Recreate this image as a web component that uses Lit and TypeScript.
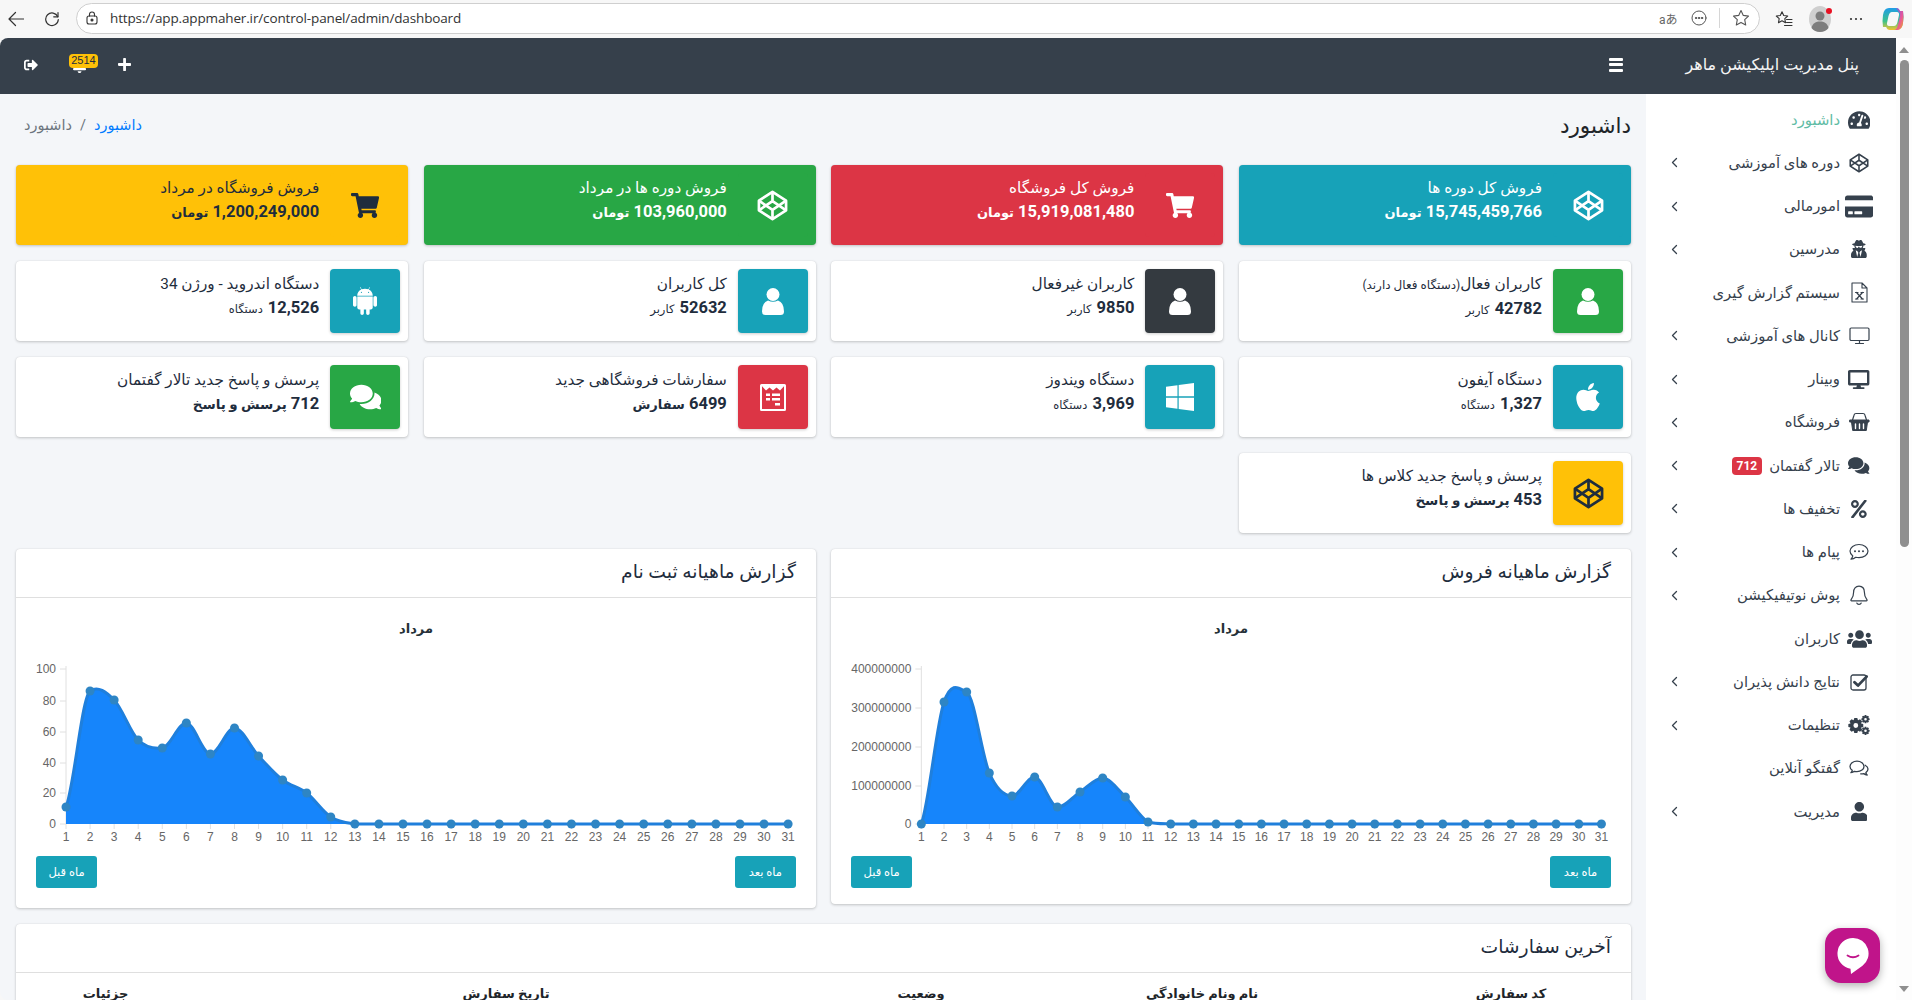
import { LitElement, html, css, svg } from 'lit';
import { customElement } from 'lit/decorators.js';

type Icon = { w: number; d: string };

const FA: Record<string, Icon> = {
  cart: { w: 576, d: 'M528.12 301.319l47.273-208C578.806 78.301 567.391 64 551.99 64H159.208l-9.166-44.81C147.758 8.021 137.93 0 126.529 0H24C10.745 0 0 10.745 0 24v16c0 13.255 10.745 24 24 24h69.883l70.248 343.435C147.325 417.1 136 435.222 136 456c0 30.928 25.072 56 56 56s56-25.072 56-56c0-15.674-6.447-29.835-16.824-40h209.647C430.447 426.165 424 440.326 424 456c0 30.928 25.072 56 56 56s56-25.072 56-56c0-22.172-12.888-41.332-31.579-50.405l5.517-24.276c3.413-15.018-8.002-29.319-23.403-29.319H218.117l-6.545-32h293.145c11.206 0 20.92-7.754 23.403-18.681z' },
  user: { w: 448, d: 'M224 256c70.7 0 128-57.3 128-128S294.7 0 224 0 96 57.3 96 128s57.3 128 128 128zm89.6 32h-16.7c-22.2 10.2-46.9 16-72.9 16s-50.6-5.8-72.9-16h-16.7C60.2 288 0 348.2 0 422.4V464c0 26.5 21.5 48 48 48h352c26.5 0 48-21.5 48-48v-41.6c0-74.2-60.2-134.4-134.4-134.4z' },
  windows: { w: 448, d: 'M0 93.7l183.6-25.3v177.4H0V93.7zm0 324.6l183.6 25.3V268.4H0v149.9zm202.8 28L448 480V268.4H202.8v177.9zm0-380.6v180.1H448V32L202.8 65.7z' },
  apple: { w: 384, d: 'M318.7 268.7c-.2-36.7 16.4-64.4 50-84.8-18.8-26.9-47.2-41.7-84.7-44.6-35.5-2.8-74.3 20.7-88.5 20.7-15 0-49.4-19.7-76.4-19.7C63.3 141.2 4 184.8 4 273.5q0 39.3 14.4 81.2c12.8 36.7 59 126.7 107.2 125.2 25.2-.6 43-17.9 75.8-17.9 31.8 0 48.3 17.9 76.4 17.9 48.6-.7 90.4-82.5 102.6-119.3-65.2-30.7-61.7-90-61.7-91.9zm-56.6-164.2c27.3-32.4 24.8-61.9 24-72.5-24.1 1.4-52 16.4-67.9 34.9-17.5 19.8-27.8 44.3-25.6 71.9 26.1 2 49.9-11.4 69.5-34.3z' },
  android: { w: 448, d: 'M89.6 204.5v115.8c0 15.4-12.1 27.7-27.5 27.7-15.3 0-30.1-12.4-30.1-27.7V204.5c0-15.1 14.8-27.5 30.1-27.5 15.1 0 27.5 12.4 27.5 27.5zm10.8 157c0 16.4 13.2 29.6 29.6 29.6h19.9l.3 61.1c0 36.9 55.2 36.6 55.2 0v-61.1h37.2v61.1c0 36.7 55.5 36.8 55.5 0v-61.1h20.2c16.2 0 29.4-13.2 29.4-29.6V182.1H100.4v179.4zm248-189.1H99.3c0-42.8 25.6-80 63.6-99.4l-19.1-35.3c-2.8-4.9 4.3-8 6.7-3.8l19.4 35.6c34.9-15.5 75-14.7 108.3 0L297.5 34c2.5-4.3 9.5-1.1 6.7 3.8L285.1 73c37.7 19.4 63.3 56.6 63.3 99.4zm-170.7-55.5c0-5.7-4.6-10.5-10.5-10.5-5.7 0-10.2 4.8-10.2 10.5s4.6 10.5 10.2 10.5c5.9 0 10.5-4.8 10.5-10.5zm113.4 0c0-5.7-4.6-10.5-10.2-10.5-5.9 0-10.5 4.8-10.5 10.5s4.6 10.5 10.5 10.5c5.6 0 10.2-4.8 10.2-10.5zM416 204.5v115.8c0 15.4-12.4 27.7-27.5 27.7-15.3 0-30.1-12.4-30.1-27.7V204.5c0-15.1 14.8-27.5 30.1-27.5 15.1 0 27.5 12.4 27.5 27.5z' },
  comments: { w: 576, d: 'M416 192c0-88.4-93.1-160-208-160S0 103.6 0 192c0 34.3 14.1 65.9 38 92-13.4 30.2-35.5 54.2-35.8 54.5-2.2 2.3-2.8 5.7-1.5 8.7S4.8 352 8 352c36.6 0 66.9-12.3 88.7-25 32.2 15.7 70.3 25 111.3 25 114.9 0 208-71.6 208-160zm122 220c23.9-26 38-57.7 38-92 0-66.9-53.5-124.2-129.3-148.1.9 6.6 1.3 13.3 1.3 20.1 0 105.9-107.7 192-240 192-10.8 0-21.3-.8-31.7-1.9C207.8 439.6 281.8 480 368 480c41 0 79.1-9.2 111.3-25 21.8 12.7 52.1 25 88.7 25 3.2 0 6.1-1.9 7.3-4.8 1.3-2.9.7-6.3-1.5-8.7-.3-.3-22.4-24.2-35.8-54.5z' },
  tach: { w: 576, d: 'M288 32C128.94 32 0 160.94 0 320c0 52.8 14.25 102.26 39.06 144.8 5.61 9.62 16.3 15.2 27.44 15.2h443c11.14 0 21.83-5.58 27.44-15.2C561.75 422.26 576 372.8 576 320c0-159.06-128.94-288-288-288zm0 64c14.71 0 26.58 10.13 30.32 23.65-1.11 2.26-2.64 4.23-3.45 6.67l-9.22 27.67c-5.13 3.49-10.97 6.01-17.64 6.01-17.67 0-32-14.33-32-32S270.33 96 288 96zM96 384c-17.67 0-32-14.33-32-32s14.33-32 32-32 32 14.33 32 32-14.33 32-32 32zm48-160c-17.67 0-32-14.33-32-32s14.33-32 32-32 32 14.33 32 32-14.33 32-32 32zm246.77-72.41l-61.33 184C343.13 347.33 352 364.54 352 384c0 11.72-3.38 22.55-8.88 32H232.88c-5.5-9.45-8.88-20.28-8.88-32 0-33.94 26.5-61.43 59.9-63.59l61.34-184.01c4.17-12.56 17.73-19.45 30.36-15.17 12.57 4.19 19.35 17.79 15.17 30.36zm14.66 57.2l15.52-46.55c3.47-1.29 7.13-2.23 11.05-2.23 17.67 0 32 14.33 32 32s-14.33 32-32 32c-11.38-.01-20.89-6.28-26.57-15.22zM480 384c-17.67 0-32-14.33-32-32s14.33-32 32-32 32 14.33 32 32-14.33 32-32 32z' },
  card: { w: 576, d: 'M0 432c0 26.5 21.5 48 48 48h480c26.5 0 48-21.5 48-48V256H0v176zm192-68c0-6.6 5.4-12 12-12h136c6.6 0 12 5.4 12 12v40c0 6.6-5.4 12-12 12H204c-6.6 0-12-5.4-12-12v-40zm-128 0c0-6.6 5.4-12 12-12h72c6.6 0 12 5.4 12 12v40c0 6.6-5.4 12-12 12H76c-6.6 0-12-5.4-12-12v-40zM576 80v48H0V80c0-26.5 21.5-48 48-48h480c26.5 0 48 21.5 48 48z' },
  secret: { w: 448, d: 'M383.9 308.3l23.9-62.6c4-10.5-3.7-21.7-15-21.7h-58.5c11-18.9 17.8-40.6 17.8-64v-.3c39.2-7.8 64-19.1 64-31.7 0-13.3-27.3-25.1-70.1-33-9.2-32.8-27-65.8-40.6-82.8-9.5-11.9-25.9-15.6-39.5-8.8l-27.6 13.8c-9 4.5-19.6 4.5-28.6 0L182.1 3.4c-13.6-6.8-30-3.1-39.5 8.8-13.5 17-31.4 50-40.6 82.8-42.7 7.9-70 19.7-70 33 0 12.6 24.8 23.9 64 31.7v.3c0 23.4 6.8 45.1 17.8 64H56.3c-11.5 0-19.2 11.7-14.7 22.3l25.8 60.2C27.3 329.8 0 372.7 0 422.4v44.8C0 491.9 20.1 512 44.8 512h358.4c24.7 0 44.8-20.1 44.8-44.8v-44.8c0-48.4-25.8-90.4-64.1-114.1zM176 480l-41.6-192 49.6 32 24 40-32 120zm96 0l-32-120 24-40 49.6-32L272 480zm41.7-298.5c-3.9 11.9-7 24.6-16.5 33.4-10.1 9.3-48 22.4-64-25-2.8-8.4-15.4-8.4-18.3 0-17 50.2-56 32.4-64 25-9.5-8.8-12.7-21.5-16.5-33.4-.8-2.5-6.3-5.7-6.3-5.8v-10.8c28.3 3.6 61 5.8 96 5.8s67.7-2.1 96-5.8v10.8c-.1.1-5.6 3.2-6.4 5.8z' },
  desktop: { w: 576, d: 'M528 0H48C21.5 0 0 21.5 0 48v320c0 26.5 21.5 48 48 48h192l-16 48h-72c-13.3 0-24 10.7-24 24s10.7 24 24 24h272c13.3 0 24-10.7 24-24s-10.7-24-24-24h-72l-16-48h192c26.5 0 48-21.5 48-48V48c0-26.5-21.5-48-48-48zm-16 352H64V64h448v288z' },
  percent: { w: 448, d: 'M112 224c61.9 0 112-50.1 112-112S173.9 0 112 0 0 50.1 0 112s50.1 112 112 112zm0-160c26.5 0 48 21.5 48 48s-21.5 48-48 48-48-21.5-48-48 21.5-48 48-48zm224 224c-61.9 0-112 50.1-112 112s50.1 112 112 112 112-50.1 112-112-50.1-112-112-112zm0 160c-26.5 0-48-21.5-48-48s21.5-48 48-48 48 21.5 48 48-21.5 48-48 48zM392.3.2l31.6-.1c19.4-.1 30.9 21.8 19.7 37.8L77.4 501.6a23.95 23.95 0 0 1-19.6 10.2l-33.4.1c-19.5 0-30.9-21.9-19.7-37.8l368-463.7C377.2 4 384.5.2 392.3.2z' },
  users: { w: 640, d: 'M96 224c35.3 0 64-28.7 64-64s-28.7-64-64-64-64 28.7-64 64 28.7 64 64 64zm448 0c35.3 0 64-28.7 64-64s-28.7-64-64-64-64 28.7-64 64 28.7 64 64 64zm32 32h-64c-17.6 0-33.5 7.1-45.1 18.6 40.3 22.1 68.9 62 75.1 109.4h66c17.7 0 32-14.3 32-32v-32c0-35.3-28.7-64-64-64zm-256 0c61.9 0 112-50.1 112-112S381.9 32 320 32 208 82.1 208 144s50.1 112 112 112zm76.8 32h-8.3c-20.8 10-43.9 16-68.5 16s-47.6-6-68.5-16h-8.3C179.6 288 128 339.6 128 403.2V432c0 26.5 21.5 48 48 48h288c26.5 0 48-21.5 48-48v-28.8c0-63.6-51.6-115.2-115.2-115.2zm-223.7-13.4C161.5 263.1 145.6 256 128 256H64c-35.3 0-64 28.7-64 64v32c0 17.7 14.3 32 32 32h65.9c6.3-47.4 34.9-87.3 75.2-109.4z' },
  signout: { w: 512, d: 'M497 273L329 441c-15 15-41 4.5-41-17v-96H152c-13.3 0-24-10.7-24-24v-96c0-13.3 10.7-24 24-24h136V88c0-21.4 25.9-32 41-17l168 168c9.3 9.4 9.3 24.6 0 34zM192 436v-40c0-6.6-5.4-12-12-12H96c-17.7 0-32-14.3-32-32V160c0-17.7 14.3-32 32-32h84c6.6 0 12-5.4 12-12V76c0-6.6-5.4-12-12-12H96c-53 0-96 43-96 96v192c0 53 43 96 96 96h84c6.6 0 12-5.4 12-12z' },
  plus: { w: 448, d: 'M416 208H272V64c0-17.67-14.33-32-32-32h-32c-17.67 0-32 14.33-32 32v144H32c-17.67 0-32 14.33-32 32v32c0 17.67 14.33 32 32 32h144v144c0 17.67 14.33 32 32 32h32c17.67 0 32-14.33 32-32V304h144c17.67 0 32-14.33 32-32v-32c0-17.67-14.33-32-32-32z' },
  bell: { w: 448, d: 'M224 512c35.32 0 63.97-28.65 63.97-64H160.03c0 35.35 28.65 64 63.97 64zm215.39-149.71c-19.32-20.76-55.47-51.99-55.47-154.29 0-77.7-54.48-139.9-127.94-155.16V32c0-17.67-14.32-32-31.98-32s-31.98 14.33-31.98 32v20.84C118.56 68.1 64.08 130.3 64.08 208c0 102.3-36.15 133.53-55.47 154.29-6 6.45-8.66 14.16-8.61 21.71.11 16.4 12.98 32 32.1 32h383.8c19.12 0 32-15.6 32.1-32 .05-7.55-2.61-15.27-8.61-21.71z' },
};

const fa = (name: string, h: number) => {
  const ic = FA[name];
  return html`<svg class="fa" viewBox="0 0 ${ic.w} 512" width=${(ic.w / 512) * h} height=${h}><path fill="currentColor" d=${ic.d}></path></svg>`;
};

const codepen = (size: number, sw = 2.1) => html`<svg class="fa" viewBox="0 0 24 24" width=${size} height=${size} fill="none" stroke="currentColor" stroke-width=${sw} stroke-linejoin="round">
  <path d="M12 1.5 22.5 8.3v7.4L12 22.5 1.5 15.7V8.3z"></path>
  <path d="M1.5 8.3 12 15.3l10.5-7M1.5 15.7 12 8.7l10.5 7M12 1.5v7.2M12 15.3v7.2"></path>
</svg>`;

const stroke = (w: number, h: number, vb: string, body: unknown, sw = 1.5) => html`<svg class="fa" viewBox=${vb} width=${w} height=${h} fill="none" stroke="currentColor" stroke-width=${sw} stroke-linecap="round" stroke-linejoin="round">${body}</svg>`;

// the rounded bust used on the user cards
const bust = html`<svg class="fa" viewBox="0 0 22 27" width="22" height="27"><circle cx="11" cy="6.500" r="6.500" fill="currentColor"></circle><path d="M0 23.500q0-9 6-11 5 2.500 10 0 6 2 6 11 0 3.500-3.500 3.500h-15Q0 27 0 23.500z" fill="currentColor"></path></svg>`;

const gear = (cx: number, cy: number, ro: number, ri: number, teeth: number, hole: number) => {
  let d = '';
  for (let i = 0; i < teeth; i++) {
    const a = (i / teeth) * Math.PI * 2;
    const s = Math.PI / teeth;
    const pts: [number, number][] = [[ri, a - s * 0.95], [ro, a - s * 0.5], [ro, a + s * 0.5], [ri, a + s * 0.95]];
    pts.forEach(([r, t], j) => {
      d += `${i === 0 && j === 0 ? 'M' : 'L'}${(cx + r * Math.cos(t)).toFixed(2)} ${(cy + r * Math.sin(t)).toFixed(2)}`;
    });
  }
  d += `Z M${cx - hole} ${cy}a${hole} ${hole} 0 1 0 ${hole * 2} 0a${hole} ${hole} 0 1 0 ${-hole * 2} 0Z`;
  return d;
};

const sideIcons: Record<string, unknown> = {
  tach: fa('tach', 20),
  codepen: codepen(20, 1.9),
  card: fa('card', 25),
  secret: fa('secret', 18),
  excel: stroke(17, 21, '0 0 17 21', svg`<path d="M1 1h10l5 5v14H1zM11 1v5h5"></path><path d="M5.5 10.5l6 6.5M11.5 10.5l-6 6.5M4.5 10.5h2.5M10 10.5h2.5M4.5 17h2.5M10 17h2.5" stroke-width="1.2"></path>`, 1.1),
  tv: stroke(21, 18, '0 0 21 18', svg`<rect x="1" y="1" width="19" height="12.5" rx="1.2"></rect><path d="M10.5 13.5v3M6.5 16.5h8"></path>`, 1.2),
  desktop: fa('desktop', 19),
  basket: stroke(21, 20, '0 0 21 20', svg`<path d="M3.5 8 5 3.2Q5.4 1.5 7 1.5h7q1.6 0 2 1.7L17.5 8" stroke-width="1.2"></path><path d="M1 8h19v2H1zM2.5 10l1.2 8.5h13.6l1.2-8.5z" fill="currentColor"></path><path d="M6.5 12v4.5M10.5 12v4.5M14.5 12v4.5" stroke="#fff" stroke-width="1.4"></path>`, 1),
  comments: fa('comments', 19),
  percent: fa('percent', 18),
  dots: stroke(20, 18, '0 0 20 18', svg`<path d="M10 1.5c5 0 9 2.9 9 6.6s-4 6.6-9 6.6c-1.1 0-2.2-.1-3.2-.4-1.3 1-2.8 1.7-4.8 1.9.9-1 1.6-2.1 1.8-3.3C2 11.6 1 10 1 8.1 1 4.4 5 1.5 10 1.5z"></path><circle cx="6" cy="8.2" r="1" fill="currentColor" stroke="none"></circle><circle cx="10" cy="8.2" r="1" fill="currentColor" stroke="none"></circle><circle cx="14" cy="8.2" r="1" fill="currentColor" stroke="none"></circle>`, 1.2),
  bell: stroke(18, 20, '0 0 18 20', svg`<path d="M9 1.2c-3.4 0-5.4 2.6-5.4 6 0 4.6-1.5 6-2.6 7.6-.3.5 0 1 .6 1h14.8c.6 0 .9-.5.6-1-1.1-1.6-2.6-3-2.6-7.6 0-3.4-2-6-5.4-6z"></path><path d="M6.8 18c.3 1 1.2 1.4 2.2 1.4s1.9-.4 2.2-1.4"></path>`, 1.2),
  users: fa('users', 20),
  check: stroke(18, 18, '0 0 18 18', svg`<rect x="1" y="2" width="15" height="15" rx="2" stroke-width="1.3"></rect><path d="M4.5 9.2 8 12.6 16.6 3.6" stroke-width="2.8"></path>`),
  cogs: html`<svg class="fa" viewBox="0 0 22 20" width="22" height="20"><path fill="currentColor" fill-rule="evenodd" d=${gear(7.8, 10.5, 7.6, 5.8, 8, 2.4)}></path><path fill="currentColor" fill-rule="evenodd" d=${gear(17.5, 4.2, 4.2, 3.1, 8, 1.3)}></path><path fill="currentColor" fill-rule="evenodd" d=${gear(17.5, 15.8, 4.2, 3.1, 8, 1.3)}></path></svg>`,
  chat: stroke(20, 17, '0 0 20 17', svg`<path d="M8 1.2c3.9 0 7 2.3 7 5.2s-3.1 5.2-7 5.2c-.9 0-1.7-.1-2.5-.3-1 .7-2.2 1.2-3.6 1.4.7-.7 1.2-1.6 1.4-2.5C2 9.5 1 8 1 6.4 1 3.5 4.1 1.2 8 1.2z"></path><path d="M16.2 5.2c1.7.9 2.8 2.3 2.8 3.9 0 1.4-.8 2.6-2.1 3.5.2.9.6 1.7 1.3 2.4-1.4-.2-2.5-.7-3.5-1.4-1 .3-2 .4-3 .3"></path>`, 1.3),
  user: fa('user', 19),
};

const ordersIcon = html`<svg class="fa" viewBox="0 0 26 27" width="26" height="27"><path fill="#fff" fill-rule="evenodd" d="M1.5 0h23A1.5 1.5 0 0 1 26 1.5v24a1.5 1.5 0 0 1-1.5 1.5h-23A1.5 1.5 0 0 1 0 25.500v-24A1.500 1.500 0 0 1 1.500 0zM2 2.200 6 6.400l3.500-3 3.500 3 3.500-3 3.500 3 4-4.200v22.800H2zM6 9.500v2.600h4V9.500zm6 0v2.600h8V9.500zM6 14v2.600h4V14zm6 0v2.600h8V14zM15 19v2.400h5V19z"></path></svg>`;

type Info = { title: string; note?: string; value: string; word?: string; tight?: boolean; unit?: string; color: string; icon: unknown; };

const solid: Info[] = [
  { title: 'فروش کل دوره ها', value: '15,745,459,766', word: 'تومان', tight: true, color: 'teal', icon: codepen(31) },
  { title: 'فروش کل فروشگاه', value: '15,919,081,480', word: 'تومان', tight: true, color: 'red', icon: fa('cart', 25) },
  { title: 'فروش دوره ها در مرداد', value: '103,960,000', word: 'تومان', tight: true, color: 'green', icon: codepen(31) },
  { title: 'فروش فروشگاه در مرداد', value: '1,200,249,000', word: 'تومان', tight: true, color: 'yellow', icon: fa('cart', 25) },
];

const boxes: Info[] = [
  { title: 'کاربران فعال', note: '(دستگاه فعال دارند)', value: '42782', unit: 'کاربر', color: 'green', icon: bust },
  { title: 'کاربران غیرفعال', value: '9850', unit: 'کاربر', color: 'dark', icon: bust },
  { title: 'کل کاربران', value: '52632', unit: 'کاربر', color: 'teal', icon: bust },
  { title: 'دستگاه اندروید - ورژن 34', value: '12,526', unit: 'دستگاه', color: 'teal', icon: fa('android', 32) },
  { title: 'دستگاه آیفون', value: '1,327', unit: 'دستگاه', color: 'teal', icon: fa('apple', 32) },
  { title: 'دستگاه ویندوز', value: '3,969', unit: 'دستگاه', color: 'teal', icon: fa('windows', 32) },
  { title: 'سفارشات فروشگاهی جدید', value: '6499', word: 'سفارش', tight: true, color: 'red', icon: ordersIcon },
  { title: 'پرسش و پاسخ جدید تالار گفتمان', value: '712', word: 'پرسش و پاسخ', color: 'green', icon: fa('comments', 28) },
  { title: 'پرسش و پاسخ جدید کلاس ها', value: '453', word: 'پرسش و پاسخ', color: 'yellow', icon: codepen(31) },
];

const menu: { icon: string; label: string; more?: boolean; active?: boolean; badge?: string }[] = [
  { icon: 'tach', label: 'داشبورد', active: true },
  { icon: 'codepen', label: 'دوره های آموزشی', more: true },
  { icon: 'card', label: 'امورمالی', more: true },
  { icon: 'secret', label: 'مدرسین', more: true },
  { icon: 'excel', label: 'سیستم گزارش گیری' },
  { icon: 'tv', label: 'کانال های آموزشی', more: true },
  { icon: 'desktop', label: 'وبینار', more: true },
  { icon: 'basket', label: 'فروشگاه', more: true },
  { icon: 'comments', label: 'تالار گفتمان', more: true, badge: '712' },
  { icon: 'percent', label: 'تخفیف ها', more: true },
  { icon: 'dots', label: 'پیام ها', more: true },
  { icon: 'bell', label: 'پوش نوتیفیکیشن', more: true },
  { icon: 'users', label: 'کاربران' },
  { icon: 'check', label: 'نتایج دانش پذیران', more: true },
  { icon: 'cogs', label: 'تنظیمات', more: true },
  { icon: 'chat', label: 'گفتگو آنلاین' },
  { icon: 'user', label: 'مدیریت', more: true },
];

type Chart = { title: string; left: number; x0: number; step: number; ticks: [string, number][]; ys: number[]; next: string; };

const BASE = 824;
const pad = (ys: number[]) => ys.concat(Array(31 - ys.length).fill(BASE));

const charts: Chart[] = [
  {
    title: 'گزارش ماهیانه فروش', left: 831.67, x0: 922, step: 22.67,
    ticks: [['400000000', 669], ['300000000', 708], ['200000000', 747], ['100000000', 786], ['0', 824]],
    ys: pad([824, 702, 692, 773, 796, 777, 807, 792, 778, 797, 822]), next: 'ماه بعد',
  },
  {
    title: 'گزارش ماهیانه ثبت نام', left: 16, x0: 66, step: 24.07,
    ticks: [['100', 669], ['80', 701], ['60', 732], ['40', 763], ['20', 793], ['0', 824]],
    ys: pad([807, 691, 700, 740, 748, 723, 754, 728, 756, 780, 793, 817]), next: 'ماه بعد',
  },
];

// spline through the points: tangents are eased at local peaks so the curve doesn't overshoot
const smooth = (pts: [number, number][]) => {
  const slope = (i: number) => {
    const a = pts[Math.max(i - 1, 0)][1], b = pts[i][1], c = pts[Math.min(i + 1, pts.length - 1)][1];
    const m = (c - a) / 6;
    return (b - a) * (c - b) < 0 ? m * 0.3 : m;
  };
  let d = `M${pts[0][0]} ${pts[0][1]}`;
  for (let i = 0; i < pts.length - 1; i++) {
    const p1 = pts[i], p2 = pts[i + 1];
    const dx = (p2[0] - p1[0]) / 3;
    const c1y = Math.min(BASE, p1[1] + slope(i));
    const c2y = Math.min(BASE, p2[1] - slope(i + 1));
    d += `C${(p1[0] + dx).toFixed(1)} ${c1y.toFixed(1)} ${(p2[0] - dx).toFixed(1)} ${c2y.toFixed(1)} ${p2[0].toFixed(1)} ${p2[1]}`;
  }
  return d;
};

const chartSvg = (c: Chart) => {
  const pts = c.ys.map((y, i) => [c.x0 + i * c.step, y] as [number, number]);
  const line = smooth(pts);
  const xEnd = pts[30][0];
  return html`<svg class="plot" viewBox="${c.left} 598 800 252" width="800" height="252">
    <text class="plot-title" x=${c.left + 400} y="633" text-anchor="middle">مرداد</text>
    <path d="M${c.x0} 666V${BASE}" stroke="#e0e0e0" fill="none"></path>
    ${c.ticks.map(([t, y]) => svg`
      <path d="M${c.x0 - 6} ${y}H${c.x0}" stroke="#e0e0e0"></path>
      <text class="tick" x=${c.x0 - 10} y=${y + 4} text-anchor="end">${t}</text>`)}
    <path d="${line}L${xEnd} ${BASE}L${c.x0} ${BASE}Z" fill="#1685fb"></path>
    <path d=${line} fill="none" stroke="#1f7fdc" stroke-width="3"></path>
    ${pts.map(([x, y], i) => svg`
      <path d="M${x} ${BASE}v5" stroke="#e0e0e0"></path>
      <circle cx=${x} cy=${y} r="4.5" fill="#2e85c4"></circle>
      <text class="tick" x=${x} y="841" text-anchor="middle">${i + 1}</text>`)}
  </svg>`;
};

@customElement('app-root')
export class AppRoot extends LitElement {
  static styles = css`
    :host {
      display: flex;
      flex-direction: column;
      height: 1000px;
      overflow: hidden;
      position: relative;
      background: #f7f7f7;
      font-family: Roboto, "DejaVu Sans", sans-serif;
      color: #1f2d3d;
    }
    .fa { display: block; flex: none; }

    .toolbar { height: 38px; flex: none; display: flex; align-items: center; padding-left: 8px; box-sizing: border-box; color: #333; background: #f7f7f7; }
    .tool-reload { margin: 0 16px 0 20px; }
    .pill { flex: 1; height: 31px; margin-top: -2px; box-sizing: border-box; display: flex; align-items: center; background: #fff; border: 1px solid #cfcfcf; border-radius: 16px; padding: 0 9px; }
    .url { margin-left: 12px; font-size: 13.5px; color: #333; font-family: "Open Sans", sans-serif; letter-spacing: -0.14px; }
    .pill-right { margin-left: auto; display: flex; align-items: center; color: #555; }
    .tr { font-size: 12px; color: #666; width: 16px; margin-right: 16px; font-family: Roboto, "Noto Sans CJK JP", sans-serif; white-space: nowrap; }
    .pill-sep { width: 1px; height: 20px; background: #d6d6d6; margin: 0 12px; }
    .tool-right { width: 152px; flex: none; display: flex; align-items: center; padding-left: 15px; box-sizing: border-box; }
    .tool-fav { margin-right: 16px; }
    .tool-dots { margin: 0 19px 0 18px; }
    .avatar { position: relative; width: 22px; height: 26px; }
    .avatar i { position: absolute; right: -1px; top: 2px; width: 6px; height: 6px; background: #e81123; border-radius: 50%; }

    .window { flex: 1; display: flex; min-height: 0; }
    .page { flex: 1; min-width: 0; display: flex; flex-direction: column; border-radius: 8px 0 0 8px; overflow: hidden; background: #f4f6f9; }
    .bar { width: 16px; flex: none; background: #fdfdfd; display: flex; flex-direction: column; align-items: center; box-sizing: border-box; }
    .bar-up { margin-top: 9px; border: 5px solid transparent; border-top: 0; border-bottom: 6px solid #8f8f8f; }
    .thumb { width: 9px; height: 487px; margin-top: 7px; background: #8f8f8f; border-radius: 5px; }
    .bar-down { margin-top: auto; margin-bottom: 8px; border: 5px solid transparent; border-bottom: 0; border-top: 6px solid #8f8f8f; }

    .nav { height: 56px; flex: none; display: flex; align-items: center; background: #36404b; color: #fff; padding: 0 0 3px 24px; box-sizing: border-box; }
    .brand { width: 273px; box-sizing: border-box; padding-right: 37px; font-size: 16px; white-space: nowrap; color: #f4f4f4; }
    .burger { width: 14px; display: flex; flex-direction: column; gap: 2.5px; }
    .burger i { display: block; height: 3px; background: #fff; border-radius: 1px; }
    .nav-tools { margin-inline-start: auto; display: flex; align-items: center; }
    .bell { position: relative; margin: 1px 32px 0 35px; }
    .bell span { position: absolute; left: -4px; top: -4px; width: 29px; height: 14px; background: #ffc107; border-radius: 4px; color: #1f2d3d; font: 11px/12px "Liberation Sans", sans-serif; text-align: center; }

    .body { flex: 1; display: flex; min-height: 0; }
    .side { width: 250px; flex: none; background: #fff; padding-top: 4px; box-sizing: border-box; }
    .item { height: 43.25px; display: flex; align-items: center; padding: 0 22px 0 25px; color: #36414d; font-size: 14.8px; }
    .item-icon { width: 30px; flex: none; display: flex; justify-content: center; margin-left: 4px; }
    .item.active span.label { color: #5fbca5; }
    .item-badge { background: #dc3545; color: #fff; font: 700 12px/18px Roboto, sans-serif; padding: 0 5px; border-radius: 4px; margin-right: 7px; }
    .chev { margin-inline-start: auto; }

    .main { flex: 1; min-width: 0; padding: 0 15px 0 16px; overflow: hidden; }
    .head { height: 62px; margin-bottom: 9px; display: flex; align-items: center; justify-content: space-between; }
    .head h1 { margin: 0; font-size: 21.5px; font-weight: 400; color: #212529; }
    .crumbs { font-size: 14.5px; color: #6c757d; display: flex; gap: 8px; margin-left: 8px; }
    .crumbs a { color: #007bff; }

    .grid { display: grid; grid-template-columns: repeat(4, minmax(0, 1fr)); gap: 16px 15.33px; }
    .box { height: 80px; box-sizing: border-box; padding: 8px; display: flex; background: #fff; border-radius: 4px; box-shadow: 0 0 1px rgba(0,0,0,.125), 0 1px 3px rgba(0,0,0,.2); }
    .box-icon { width: 70px; flex: none; display: flex; align-items: center; justify-content: center; border-radius: 4px; box-shadow: 0 1px 3px rgba(0,0,0,.2); }
    .solid .box-icon { box-shadow: none; }
    .text { margin-right: 11px; padding-top: 3px; line-height: 24px; white-space: nowrap; }
    .t1 { font-size: 15.3px; }
    .t1 small { font-size: 12px; }
    .t2 { font-size: 16.5px; font-weight: 700; }
    .t2 small { font-size: 11.5px; font-weight: 400; margin-right: 1px; }
    .t2 b { font-size: 13.5px; }
    .t2 b.tight { font-size: 13px; }
    .teal { background: #17a2b8; color: #fff; }
    .red { background: #dc3545; color: #fff; }
    .green { background: #28a745; color: #fff; }
    .yellow { background: #ffc107; color: #1f2d3d; }
    .dark { background: #343a40; color: #fff; }

    .charts { display: grid; grid-template-columns: repeat(2, minmax(0, 1fr)); gap: 15.33px; align-items: start; margin-top: 16px; }
    .card { background: #fff; border-radius: 4px; box-shadow: 0 0 1px rgba(0,0,0,.125), 0 1px 3px rgba(0,0,0,.2); }
    .card-head { height: 49px; box-sizing: border-box; padding: 0 20px 3px; display: flex; align-items: center; border-bottom: 1px solid #dfdfdf; font-size: 18.8px; color: #1f2d3d; }
    .plot { display: block; }
    .plot-title { font: 700 13px "DejaVu Sans", sans-serif; fill: #263238; }
    .tick { font: 12px "Liberation Sans", sans-serif; fill: #666; direction: ltr; }
    .btns { display: flex; justify-content: space-between; padding: 6px 20px 16px; }
    .charts .card:nth-child(2) .btns { padding-bottom: 20px; }
    .btn { height: 32px; width: 61px; display: flex; align-items: center; justify-content: center; background: #17a2b8; color: #fff; border-radius: 3px; font-size: 11.5px; }

    .orders { margin-top: 16px; height: 200px; }
    table { width: 100%; border-collapse: collapse; table-layout: fixed; }
    th { font-size: 13px; font-weight: 700; padding: 13px 0; color: #212529; text-align: center; }
    th:nth-child(1) { width: 240px; }
    th:nth-child(2) { width: 378px; }
    th:nth-child(3) { width: 184px; }
    th:nth-child(4) { width: 646px; }
    th:nth-child(5) { padding-left: 12px; }

    .chat { position: absolute; left: 1825px; top: 928px; width: 55px; height: 55px; border-radius: 16px; background: #c0148a; box-shadow: 0 3px 8px rgba(0,0,0,.3); display: flex; align-items: center; justify-content: center; }
  `;

  private renderBox(b: Info, solidCard: boolean) {
    return html`<div class="box ${solidCard ? `solid ${b.color}` : ''}">
      <div class="box-icon ${b.color}">${b.icon}</div>
      <div class="text">
        <div class="t1">${b.title}${b.note ? html`<small>${b.note}</small>` : ''}</div>
        <div class="t2">${b.value}${b.word ? html` <b class=${b.tight ? 'tight' : ''}>${b.word}</b>` : ''}${b.unit ? html` <small>${b.unit}</small>` : ''}</div>
      </div>
    </div>`;
  }

  private renderToolbar() {
    return html`<div class="toolbar">
      ${stroke(16, 16, '0 0 16 16', svg`<path d="M15.500 8H1M7.500 1.500 1 8l6.500 6.500"></path>`, 1.2)}
      <div class="tool-reload">${stroke(16, 16, '0 0 16 16', svg`<path d="M13.800 5.800A6.300 6.300 0 1 0 14.300 8.500"></path><path d="M14 1.500v4.300H9.700"></path>`, 1.2)}</div>
      <div class="pill">
        ${stroke(12, 14, '0 0 12 14', svg`<rect x="1" y="5" width="10" height="8" rx="2"></rect><path d="M3.500 5V3.500a2.500 2.500 0 0 1 5 0V5"></path><circle cx="6" cy="9" r="1" fill="currentColor"></circle>`, 1.1)}
        <span class="url">https://app.appmaher.ir/control-panel/admin/dashboard</span>
        <div class="pill-right">
          <span class="tr">aあ</span>
          ${stroke(16, 16, '0 0 16 16', svg`<circle cx="8" cy="8" r="7"></circle><circle cx="5" cy="8" r=".7" fill="currentColor"></circle><circle cx="8" cy="8" r=".7" fill="currentColor"></circle><circle cx="11" cy="8" r=".7" fill="currentColor"></circle>`, 1)}
          <div class="pill-sep"></div>
          ${stroke(18, 18, '0 0 18 18', svg`<path d="M9 1.500l2.300 4.900 5.200.7-3.800 3.600 1 5.300L9 13.400 4.300 16l1-5.300L1.500 7.100l5.200-.7z"></path>`, 1.1)}
        </div>
      </div>
      <div class="tool-right">
        <div class="tool-fav">${stroke(18, 18, '0 0 18 18', svg`<path d="M7 1.800l1.700 3.700 4 .5-2.900 2.700.7 4L7 10.800l-3.500 1.900.7-4L1.300 6l4-.5z"></path><path d="M11.500 9.500h5.500M11.500 12.500h5.500M9.500 15.500h7.500" stroke-width="1"></path>`, 1.1)}</div>
        <div class="avatar">
          <svg class="fa" viewBox="0 0 22 26" width="22" height="26"><ellipse cx="11" cy="13" rx="11" ry="13" fill="#cfcfcf"></ellipse><circle cx="11" cy="10" r="4.500" fill="#7d7d7d"></circle><path d="M2.500 22c1-5 4.500-6.500 8.500-6.500s7.500 1.500 8.500 6.500c-2 2.500-5 4-8.500 4s-6.500-1.500-8.500-4z" fill="#7d7d7d"></path></svg>
          <i></i>
        </div>
        <div class="tool-dots">
          <svg class="fa" viewBox="0 0 14 4" width="14" height="4"><circle cx="2" cy="2" r="1.100" fill="#333"></circle><circle cx="7" cy="2" r="1.100" fill="#333"></circle><circle cx="12" cy="2" r="1.100" fill="#333"></circle></svg>
        </div>
        <svg class="fa" viewBox="0 0 22 24" width="22" height="24">
          <defs>
            <linearGradient id="cp1" x1="0" y1="0" x2="0" y2="1"><stop offset="0" stop-color="#1f9de8"></stop><stop offset=".6" stop-color="#3cc28a"></stop><stop offset="1" stop-color="#f4c430"></stop></linearGradient>
            <linearGradient id="cp2" x1="0" y1="0" x2="1" y2="1"><stop offset="0" stop-color="#6a5be6"></stop><stop offset=".6" stop-color="#e8559b"></stop><stop offset="1" stop-color="#f5a623"></stop></linearGradient>
          </defs>
          <path fill-rule="evenodd" d="M7 1h7q3 0 3.800 3H21q1 6 0 12-1 7-6 7H8q-3 0-3.800-3H1Q0 14 1 8q1-7 6-7zM10 5Q7.500 5 6.500 9L5 16q-.3 3 2 3h5q2.500 0 3.500-4L17 8q.3-3-2-3z" fill="url(#cp1)"></path>
          <path d="M14 1q3 0 3.800 3H21q1 6 0 12-1 7-6 7H12q3 0 4-5l2-9q.5-3-1-4z" fill="url(#cp2)"></path>
        </svg>
      </div>
    </div>`;
  }

  render() {
    return html`
      ${this.renderToolbar()}
      <div class="window">
        <div class="page" dir="rtl">
          <div class="nav">
            <div class="brand">پنل مدیریت اپلیکیشن ماهر</div>
            <div class="burger"><i></i><i></i><i></i></div>
            <div class="nav-tools">
              ${fa('plus', 15)}
              <div class="bell">${fa('bell', 15)}<span>2514</span></div>
              ${fa('signout', 14)}
            </div>
          </div>
          <div class="body">
            <nav class="side">
              ${menu.map((m) => html`<div class="item ${m.active ? 'active' : ''}">
                <span class="item-icon">${sideIcons[m.icon]}</span>
                <span class="label">${m.label}</span>
                ${m.badge ? html`<span class="item-badge">${m.badge}</span>` : ''}
                ${m.more ? html`<span class="chev">${stroke(7, 11, '0 0 7 11', svg`<path d="M5.500 1.500 1.500 5.500 5.500 9.500"></path>`, 1.3)}</span>` : ''}
              </div>`)}
            </nav>
            <main class="main">
              <div class="head">
                <h1>داشبورد</h1>
                <div class="crumbs"><a>داشبورد</a><span>/</span><span>داشبورد</span></div>
              </div>
              <div class="grid">
                ${solid.map((b) => this.renderBox(b, true))}
                ${boxes.map((b) => this.renderBox(b, false))}
              </div>
              <div class="charts">
                ${charts.map((c) => html`<div class="card">
                  <div class="card-head">${c.title}</div>
                  ${chartSvg(c)}
                  <div class="btns"><div class="btn">${c.next}</div><div class="btn">ماه قبل</div></div>
                </div>`)}
              </div>
              <div class="card orders">
                <div class="card-head">آخرین سفارشات</div>
                <table><thead><tr>
                  <th>کد سفارش</th><th>نام ونام خانوادگی</th><th>وضعیت</th><th>تاریخ سفارش</th><th>جزئیات</th>
                </tr></thead></table>
              </div>
            </main>
          </div>
        </div>
        <div class="bar"><div class="bar-up"></div><div class="thumb"></div><div class="bar-down"></div></div>
      </div>
      <div class="chat">
        <svg class="fa" viewBox="0 0 32 36" width="32" height="36">
          <path d="M16 0a15.500 15.500 0 0 1 9.500 27.800L14 36l-.5-5.200A15.500 15.500 0 0 1 16 0z" fill="#fff"></path>
          <path d="M10.500 17.500q5.500 3.500 11 0" fill="none" stroke="#c0148a" stroke-width="1.800" stroke-linecap="round"></path>
        </svg>
      </div>
    `;
  }
}
